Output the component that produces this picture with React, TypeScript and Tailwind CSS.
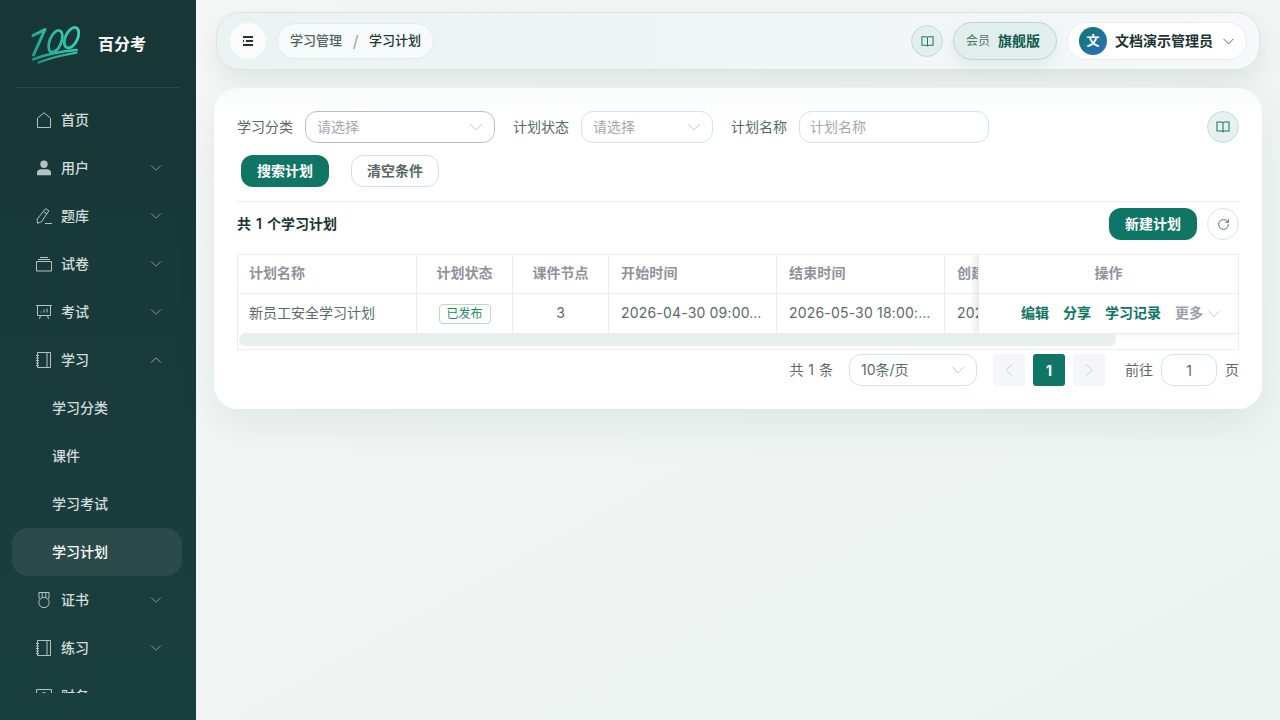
import React from 'react';
import { ChevronDown, ChevronUp, ChevronLeft, ChevronRight, RotateCw } from 'lucide-react';

const FONT = "font-['Inter','Noto_Sans_CJK_SC',sans-serif]";

function HomeIcon() {
  return (
    <svg width="16" height="16" viewBox="0 0 16 16" fill="none" stroke="currentColor" strokeWidth="1">
      <path d="M1.500 15.500V6.200L8 .8l6.500 5.400v9.300z" />
    </svg>
  );
}
function UserIcon() {
  return (
    <svg width="16" height="16" viewBox="0 0 16 16" fill="currentColor">
      <circle cx="8" cy="4.300" r="3.700" />
      <path d="M1 12.500c0-2 1.800-3.300 3.800-3.300h6.400c2 0 3.800 1.300 3.800 3.300v2.800H1z" />
    </svg>
  );
}
function PenIcon() {
  return (
    <svg width="16" height="16" viewBox="0 0 16 16" fill="none" stroke="currentColor" strokeWidth="1">
      <path d="M9.500.7l3.400 2L5.500 13.800l-4 1.500-.3-4.200zM7.600 3.800l3.400 2M9 15.500h7" />
    </svg>
  );
}
function BoxIcon() {
  return (
    <svg width="16" height="16" viewBox="0 0 16 16" fill="none" stroke="currentColor" strokeWidth="1">
      <path d="M.5 5.500h15v9.500H.5zM2 3.500h12M4 1.500h8" />
    </svg>
  );
}
function BoardIcon() {
  return (
    <svg width="16" height="16" viewBox="0 0 16 16" fill="none" stroke="currentColor" strokeWidth="1">
      <path d="M0 1.500h16M1.500 1.500v10h13v-10M4.500 11.500l-1 3.500M11.500 11.500l1 3.500M5 8.500v-1M8 8.500v-3M11 8.500v-4" />
    </svg>
  );
}
function NoteIcon() {
  return (
    <svg width="16" height="16" viewBox="0 0 16 16" fill="none" stroke="currentColor" strokeWidth="1">
      <path d="M1.500.5h13v15h-13zM11 .5v15M0 3.500h3M0 6h3M0 8.500h3M0 11h3M0 13.500h3" />
    </svg>
  );
}
function MedalIcon() {
  return (
    <svg width="16" height="16" viewBox="0 0 16 16" fill="none" stroke="currentColor" strokeWidth="1">
      <circle cx="8" cy="10.500" r="5.200" />
      <path d="M3.200 7L2.800.5h10.400l-.4 6.500M6.200 .5v4.800M9.800 .5v4.800" />
    </svg>
  );
}
function MoneyIcon() {
  return (
    <svg width="16" height="16" viewBox="0 0 16 16" fill="none" stroke="currentColor" strokeWidth="1">
      <path d="M.5 1.500h15v11H.5z" />
      <circle cx="8" cy="7" r="2.500" />
    </svg>
  );
}
function BookIcon({ size = 14 }: { size?: number }) {
  return (
    <svg width={size} height={size} viewBox="0 0 14 14" fill="none" stroke="currentColor" strokeWidth="1.100">
      <path d="M1 2h4.500c.9 0 1.500.5 1.500 1.300V12.200C7 11.500 6.400 11 5.500 11H1zM13 2H8.500C7.600 2 7 2.500 7 3.300v8.900C7 11.500 7.600 11 8.500 11H13z" />
    </svg>
  );
}

function Logo() {
  return (
    <svg width="52" height="40" viewBox="0 0 52 40" fill="none" strokeLinecap="round" strokeLinejoin="round">
      <defs>
        <linearGradient id="logoGrad" gradientUnits="userSpaceOnUse" x1="3" y1="38" x2="48" y2="4">
          <stop offset="0" stopColor="#1a9c88" />
          <stop offset="1" stopColor="#3ad8bb" />
        </linearGradient>
      </defs>
      <g stroke="url(#logoGrad)">
        <path strokeWidth="3" d="M3 11.500L15 5.500 3.500 31" />
        <ellipse cx="25.500" cy="17.300" rx="5.800" ry="11.500" strokeWidth="2.700" transform="rotate(22 25.500 17.300)" />
        <ellipse cx="41.500" cy="13.700" rx="6" ry="11" strokeWidth="2.700" transform="rotate(26 41.500 13.700)" />
        <path strokeWidth="2.400" d="M3 35.300C17 30 33 27 46.700 26" />
        <path strokeWidth="2" d="M8.500 38.700c12-5 25-8 38-10" />
      </g>
    </svg>
  );
}

const menu = [
  { label: '首页', icon: <HomeIcon /> },
  { label: '用户', icon: <UserIcon />, arrow: 'down' },
  { label: '题库', icon: <PenIcon />, arrow: 'down' },
  { label: '试卷', icon: <BoxIcon />, arrow: 'down' },
  { label: '考试', icon: <BoardIcon />, arrow: 'down' },
  { label: '学习', icon: <NoteIcon />, arrow: 'up' },
];

function MenuItem({ label, icon, arrow }: { label: string; icon: React.ReactNode; arrow?: string }) {
  return (
    <div className="h-12 shrink-0 flex items-center pl-[36px] pr-[31px] text-[14px] font-medium text-[#d3dcdb]">
      <span className="w-4 h-4 mr-[9px] flex items-center justify-center text-[#b4c3c1]">{icon}</span>
      <span className="flex-1 pb-[2px]">{label}</span>
      {arrow === 'down' && <ChevronDown size={18} strokeWidth={0.9} className="text-[#b4c3c1]" />}
      {arrow === 'up' && <ChevronUp size={18} strokeWidth={0.9} className="text-[#d3dcdb]" />}
    </div>
  );
}

function SubItem({ label, active }: { label: string; active?: boolean }) {
  return (
    <div className={`h-12 shrink-0 ml-3 w-[170px] pl-10 pb-[2px] flex items-center rounded-2xl text-[14px] font-medium ${active ? 'bg-[#2b4b4a] text-white' : 'text-[#d3dcdb]'}`}>
      {label}
    </div>
  );
}

function Sidebar() {
  return (
    <aside className="w-[196px] h-full shrink-0 bg-gradient-to-b from-[#173636] to-[#1a3f3f] flex flex-col">
      <div className="h-[88px] shrink-0 mx-4 border-b border-[#27494a] flex items-center pl-[14px]">
        <Logo />
        <span className="ml-[16px] text-[16px] font-bold text-white">百分考</span>
      </div>
      <nav className="mt-2 h-[597px] overflow-hidden flex flex-col">
        {menu.map((m) => (
          <MenuItem key={m.label} {...m} />
        ))}
        <SubItem label="学习分类" />
        <SubItem label="课件" />
        <SubItem label="学习考试" />
        <SubItem label="学习计划" active />
        <MenuItem label="证书" icon={<MedalIcon />} arrow="down" />
        <MenuItem label="练习" icon={<NoteIcon />} arrow="down" />
        <MenuItem label="财务" icon={<MoneyIcon />} arrow="down" />
      </nav>
    </aside>
  );
}

function Header() {
  return (
    <header className="h-[58px] mx-[2px] rounded-[24px] border border-[#d9e5e3] bg-gradient-to-r from-[#eaf3f2] to-[#f6f8fb] shadow-[0_10px_24px_rgba(20,50,45,0.09)] flex items-center pl-[13px] pr-[12px]">
      <div className="w-9 h-9 rounded-full bg-[#fafcfc] flex items-center justify-center">
        <svg width="12" height="10" viewBox="0 0 12 10" fill="none" stroke="#1d3432" strokeWidth="1.800">
          <path d="M1 1h10M4 5h7M1 9h10M1 5h1" />
        </svg>
      </div>
      <div className="ml-[11px] w-[157px] h-9 rounded-full bg-[#f6fafa] border border-[#e4eceb] flex items-center pl-3 text-[13px] font-medium">
        <span className="text-[#4f6360]">学习管理</span>
        <span className="w-[27px] text-center text-[#9aa8a6] text-[16px] font-normal">/</span>
        <span className="text-[#1d3432]">学习计划</span>
      </div>
      <div className="flex-1" />
      <div className="w-8 h-8 rounded-full bg-[#e3efed] border border-[#c5dcd8] flex items-center justify-center text-[#1b7a6a]">
        <BookIcon size={13} />
      </div>
      <div className="ml-[10px] h-[38px] w-[104px] rounded-full bg-[#e2eeec] border border-[#bcd7d2] shadow-[0_6px_16px_rgba(15,90,75,0.08)] flex items-center pl-[12px] pb-[1px]">
        <span className="text-[12px] text-[#4d7770]">会员</span>
        <span className="ml-2 text-[14px] font-bold text-[#0e5a4e]">旗舰版</span>
      </div>
      <div className="ml-[10px] h-[38px] w-[180px] rounded-full bg-white border border-[#e8eeee] flex items-center pl-[11px]">
        <div className="w-7 h-7 rounded-full bg-gradient-to-br from-[#0f766e] to-[#2f6fbd] flex items-center justify-center text-white text-[13px] font-bold">文</div>
        <span className="ml-2 pb-[1px] text-[14px] font-semibold text-[#1d3432] whitespace-nowrap">文档演示管理员</span>
        <ChevronDown size={19} strokeWidth={1.200} className="ml-[6px] text-[#4f6360]" />
      </div>
    </header>
  );
}

function Select({ width, border = 'border-[#d5e3e1]' }: { width: string; border?: string }) {
  return (
    <div className={`${width} h-8 rounded-[12px] border ${border} bg-white flex items-center pl-[11px] pr-[7px] justify-between text-[14px] text-[#a3a8b0]`}>
      <span className="pb-[2px]">请选择</span>
      <ChevronDown size={22} strokeWidth={0.9} className="text-[#b4b9c0]" />
    </div>
  );
}

const cols = [
  { label: '计划名称', w: 'w-[179px]', cls: 'pl-[11px]', value: '新员工安全学习计划' },
  { label: '计划状态', w: 'w-[96px]', cls: 'justify-center' },
  { label: '课件节点', w: 'w-[96px]', cls: 'justify-center', value: '3' },
  { label: '开始时间', w: 'w-[168px]', cls: 'pl-3 tracking-[0.18px]', value: '2026-04-30 09:00…' },
  { label: '结束时间', w: 'w-[168px]', cls: 'pl-3 tracking-[0.18px]', value: '2026-05-30 18:00:…' },
  { label: '创建时间', w: 'w-[168px]', cls: 'pl-3 tracking-[0.18px]', value: '2026-04-30 09:00…' },
];

function DataTable() {
  return (
    <div className="relative mt-[14px] h-[96px] border border-[#e9ecf3] overflow-hidden">
      <div className="flex h-[39px] border-b border-[#e9ecf3] text-[14px] font-semibold text-[#8f949c]">
        {cols.map((c) => (
          <div key={c.label} className={`${c.w} shrink-0 pb-[3px] border-r border-[#e9ecf3] flex items-center whitespace-nowrap ${c.cls}`}>
            {c.label}
          </div>
        ))}
      </div>
      <div className="flex h-[39px] text-[14px] text-[#5b6b68]">
        {cols.map((c, i) => (
          <div key={c.label} className={`${c.w} shrink-0 pb-[2px] border-r border-[#e9ecf3] flex items-center whitespace-nowrap ${c.cls}`}>
            {i === 1 ? (
              <span className="h-[20px] w-[52px] mt-[2px] rounded-[4px] border border-[#b5e3ae] text-[#1a8a5f] text-[12px] flex items-center justify-center">已发布</span>
            ) : (
              c.value
            )}
          </div>
        ))}
      </div>
      {/* fixed action column */}
      <div className="absolute right-0 top-0 w-[260px] h-[79px] bg-white border-l border-b border-[#e9ecf3] shadow-[-4px_0_6px_rgba(0,0,0,0.08)]">
        <div className="h-[39px] pb-[3px] border-b border-[#e9ecf3] flex items-center justify-center text-[14px] font-semibold text-[#8f949c]">操作</div>
        <div className="h-[39px] flex items-center pl-[42px] text-[14px] font-semibold text-[#107564]">
          <span className="pb-[2px]">编辑</span>
          <span className="pb-[2px] ml-[14px]">分享</span>
          <span className="pb-[2px] ml-[14px]">学习记录</span>
          <span className="pb-[2px] ml-[14px] text-[#9ca1a8]">更多</span>
          <ChevronDown size={20} strokeWidth={0.9} className="ml-px text-[#a8aeb6]" />
        </div>
      </div>
      {/* scroll thumb over the table foot */}
      <div className="absolute left-0 top-[78px] w-[878px] pl-[1px]">
        <div className="h-[13px] rounded-full bg-[#e7efed]" />
      </div>
    </div>
  );
}

function Pager() {
  return (
    <div className="mt-1 h-8 flex items-center justify-end text-[14px] text-[#5b6b68]">
      <span className="pb-[2px] [word-spacing:1px]">共 1 条</span>
      <div className="ml-4 w-[128px] h-8 rounded-[12px] border border-[#d5e3e1] flex items-center justify-between pl-[11px] pr-[7px]">
        <span className="pb-[2px]">10条/页</span>
        <ChevronDown size={22} strokeWidth={0.9} className="text-[#b4b9c0]" />
      </div>
      <div className="ml-4 w-8 h-8 rounded-[3px] bg-[#f4f6fa] flex items-center justify-center text-[#c0c5cd]">
        <ChevronLeft size={22} strokeWidth={0.9} />
      </div>
      <div className="ml-2 w-8 h-8 rounded-[3px] bg-[#0f7564] flex items-center justify-center text-white font-bold">1</div>
      <div className="ml-2 w-8 h-8 rounded-[3px] bg-[#f4f6fa] flex items-center justify-center text-[#c0c5cd]">
        <ChevronRight size={22} strokeWidth={0.9} />
      </div>
      <span className="ml-5 pb-[2px]">前往</span>
      <div className="ml-2 w-[56px] h-8 rounded-[12px] border border-[#d5e3e1] flex items-center justify-center">1</div>
      <span className="ml-2 pb-[2px]">页</span>
    </div>
  );
}

export default function App() {
  return (
    <div className={`${FONT} w-[1280px] h-[720px] overflow-hidden flex bg-gradient-to-br from-[#f6f8f7] to-[#ecf3f1]`}>
      <Sidebar />
      <main className="flex-1 min-w-0 pt-3 pl-[18px] pr-[18px]">
        <Header />
        <section className="mt-[18px] h-[321px] rounded-[24px] bg-gradient-to-b from-[#f9fbfb] to-white to-[10%] shadow-[0_16px_40px_rgba(20,60,55,0.08)] px-[23px] pt-[23px]">
          <div className="h-8 flex items-center text-[14px] text-[#566966]">
            <span className="pb-[2px]">学习分类</span>
            <div className="ml-3"><Select width="w-[190px]" border="border-[#bdbdca]" /></div>
            <span className="pb-[2px] ml-[18px]">计划状态</span>
            <div className="ml-3"><Select width="w-[132px]" /></div>
            <span className="pb-[2px] ml-[18px]">计划名称</span>
            <div className="ml-3 w-[190px] h-8 pb-[2px] rounded-[12px] border border-[#d5e3e1] flex items-center pl-[10px] text-[#a3a8b0]">计划名称</div>
            <div className="flex-1" />
            <div className="w-8 h-8 rounded-full bg-[#e6f1ef] border border-[#c9dfdb] flex items-center justify-center text-[#1b7a6a]">
              <BookIcon />
            </div>
          </div>
          <div className="mt-3 h-8 flex items-center pl-1 text-[14px] font-semibold">
            <button className="w-[88px] h-8 pb-[2px] rounded-[12px] bg-[#0f7564] text-white">搜索计划</button>
            <button className="ml-[22px] w-[88px] h-8 pb-[2px] rounded-[12px] bg-white border border-[#d5e0df] text-[#566966]">清空条件</button>
          </div>
          <div className="mt-[14px] h-[39px] pt-[6px] border-t border-[#e9ecf3] flex items-center">
            <span className="pb-[2px] text-[14px] font-semibold text-[#1d3432] [word-spacing:1.500px]">共 1 个学习计划</span>
            <div className="flex-1" />
            <button className="w-[88px] h-8 pb-[2px] rounded-[12px] bg-[#0f7564] text-white text-[14px] font-semibold">新建计划</button>
            <button className="ml-[10px] w-8 h-8 rounded-full border border-[#dbe5e4] flex items-center justify-center text-[#5b6b68]">
              <RotateCw size={13} strokeWidth={1.800} />
            </button>
          </div>
          <DataTable />
          <Pager />
        </section>
      </main>
    </div>
  );
}
